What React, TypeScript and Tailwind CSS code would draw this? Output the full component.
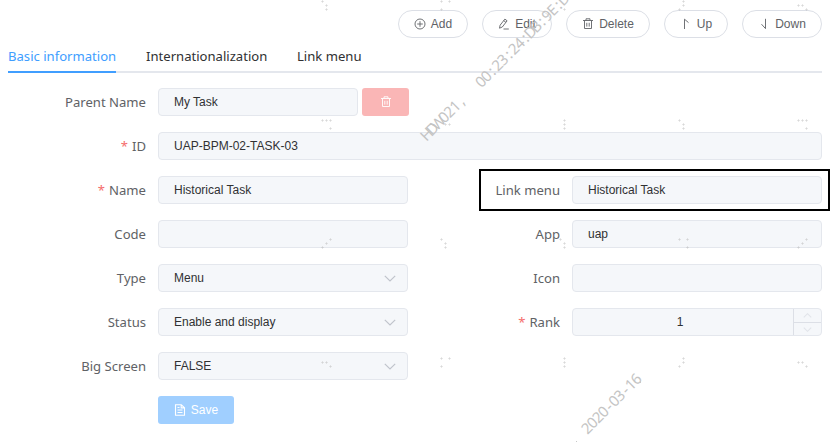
import type { ReactNode } from "react";

const iconBase = {
  fill: "none",
  stroke: "currentColor",
  viewBox: "0 0 12 12",
  width: 12,
  height: 12,
} as const;

const PlusIcon = () => (
  <svg {...iconBase} strokeWidth="0.9">
    <circle cx="6" cy="6" r="5" />
    <path d="M6 3.2v5.6M3.2 6h5.6" />
  </svg>
);
const EditIcon = () => (
  <svg {...iconBase} strokeWidth="0.9">
    <path d="M2.1 7.2 6.9 1.1 9.1 2.8 4.3 9 1.5 10.2ZM5.7 2.6l2.2 1.7M5.5 11h5.3" />
  </svg>
);
const TrashIcon = () => (
  <svg {...iconBase} strokeWidth="0.9">
    <path d="M1 2.5h10M4 2.5V.8h4v1.7M2.5 2.5v8h7v-8M4.8 4.8v3.8M7.2 4.8v3.8" />
  </svg>
);
const UpIcon = () => (
  <svg {...iconBase} strokeWidth="0.9">
    <path d="M4.5 11V1.2L8.5 4.6" />
  </svg>
);
const DownIcon = () => (
  <svg {...iconBase} strokeWidth="0.9">
    <path d="M7.5 .8v9.8L3.5 6.2" />
  </svg>
);
const DocIcon = () => (
  <svg {...iconBase} strokeWidth="1.1">
    <path d="M1.5.7h5.8l3.2 3.1v7.5h-9ZM7.2.7v3.2h3.3M3.5 3.5h2M3.5 6h5M3.5 8.5h5" />
  </svg>
);
const Chevron = ({ up = false, small = false }: { up?: boolean; small?: boolean }) => (
  <svg
    width={small ? 9 : 12}
    height={small ? 5 : 7}
    viewBox="0 0 12 7"
    fill="none"
    stroke="currentColor"
    strokeWidth={small ? 1.5 : 1.2}
    className={up ? "rotate-180" : ""}
  >
    <path d="M.8.8 6 6 11.2.8" />
  </svg>
);

function PillButton({ icon, label, width }: { icon: ReactNode; label: string; width: string }) {
  return (
    <button
      className={`flex h-7 items-center justify-center gap-[5px] rounded-full border border-[#dcdfe6] bg-white font-['Liberation_Sans',sans-serif] text-[12px] text-[#606266] ${width}`}
    >
      {icon}
      <span>{label}</span>
    </button>
  );
}

function Label({ text, required, width = "w-[138px]" }: { text: string; required?: boolean; width?: string }) {
  return (
    <label className={`shrink-0 text-right text-[13.1px] leading-7 whitespace-nowrap text-[#606266] ${width}`}>
      {required && <span className="mr-1 text-[#f56c6c]">*</span>}
      {text}
    </label>
  );
}

const boxClass =
  "flex h-7 items-center rounded border border-[#e4e7ed] bg-[#f5f7fa] px-[15px] font-['Liberation_Sans',sans-serif] text-[12px] text-[#303133]";

function Field({
  label,
  value = "",
  required,
  select,
  labelWidth,
}: {
  label: string;
  value?: string;
  required?: boolean;
  select?: boolean;
  labelWidth?: string;
}) {
  return (
    <div className="flex gap-3">
      <Label text={label} required={required} width={labelWidth} />
      <div className={`${boxClass} w-[250px] justify-between ${select ? "pr-[11px]" : ""}`}>
        <span>{value}</span>
        {select && (
          <span className="text-[#c0c4cc]">
            <Chevron />
          </span>
        )}
      </div>
    </div>
  );
}

const dots: [number, number][] = [
  [322, 1], [326, 5], [326, 9],
  [441, 1], [449, 1], [441, 9], [564, 9],
  [683, 1], [683, 5], [679, 9],
  [798, 5], [802, 5], [806, 9],
  [322, 120], [326, 120], [330, 120], [330, 128],
  [445, 124], [449, 124],
  [564, 120], [564, 124], [564, 128],
  [679, 120], [683, 124], [683, 128],
  [798, 120], [802, 120], [806, 120], [806, 128],
  [330, 239], [326, 243], [322, 247],
  [441, 239], [445, 243], [445, 247],
  [560, 239], [564, 243], [564, 247],
  [679, 239], [687, 239], [687, 247],
  [806, 239], [802, 243], [798, 247],
  [322, 362], [326, 362], [330, 366],
  [441, 358], [449, 358], [441, 366],
  [564, 358], [564, 362], [564, 366],
  [683, 358], [683, 362], [679, 366],
  [798, 362], [802, 362], [806, 366],
];

const steps = (count: number, step: number) => Array.from({ length: count }, (_, i) => i * step).join(" ");

function Watermark() {
  return (
    <svg className="pointer-events-none absolute inset-0" width="830" height="442" viewBox="0 0 830 442">
      {dots.map(([x, y]) => (
        <path
          key={`${x}-${y}`}
          d={`M${x - 1} ${y + 0.5}h3M${x + 0.5} ${y - 1}v3`}
          stroke="#b4b4b4"
          strokeOpacity="0.3"
          strokeWidth="1"
        />
      ))}
      <g
        fill="#c4c4c4"
        className="font-['Noto_Sans',sans-serif]"
        fontSize="15"
        textAnchor="middle"
      >
        <text transform="translate(430.5 138) rotate(-45)" x={steps(7, 8)}>
          HDW021,
        </text>
        <text transform="translate(484.5 85.5) rotate(-45)" x={steps(16, 7.8)}>
          00:23:24:DB:9E:D
        </text>
        <text transform="translate(590.5 432) rotate(-45)" x={steps(10, 7.75)}>
          2020-03-16
        </text>
      </g>
      <path d="M640 381h1v2h-1zM576 441h1v1h-1z" fill="#c8c8c8" />
    </svg>
  );
}

export default function App() {
  return (
    <div className="relative h-[442px] w-[830px] overflow-hidden bg-white px-2 pt-[10px] font-['Noto_Sans',sans-serif]">
      <div className="flex justify-end gap-[14px]">
        <PillButton icon={<PlusIcon />} label="Add" width="w-[70px]" />
        <PillButton icon={<EditIcon />} label="Edit" width="w-[70px]" />
        <PillButton icon={<TrashIcon />} label="Delete" width="w-[84px]" />
        <PillButton icon={<UpIcon />} label="Up" width="w-[64px]" />
        <PillButton icon={<DownIcon />} label="Down" width="w-[80px]" />
      </div>

      <nav className="mt-[3px] flex h-8 gap-[30px] border-b-2 border-[#e4e7ed] text-[13.1px] leading-[31px] whitespace-nowrap text-[#303133]">
        <span className="h-8 w-[108px] border-b-2 border-[#409eff] text-[#409eff]">Basic information</span>
        <span className="w-[121px]">Internationalization</span>
        <span>Link menu</span>
      </nav>

      <form className="mt-[15px] flex flex-col gap-4">
        <div className="flex">
          <Label text="Parent Name" />
          <div className={`${boxClass} ml-3 w-[200px]`}>My Task</div>
          <button
            type="button"
            className="ml-1 flex h-7 w-[47px] items-center justify-center rounded-[3px] bg-[#fab6b6] text-white"
          >
            <TrashIcon />
          </button>
        </div>
        <div className="flex gap-3">
          <Label text="ID" required />
          <div className={`${boxClass} flex-1`}>UAP-BPM-02-TASK-03</div>
        </div>
        <div className="flex justify-between">
          <Field label="Name" value="Historical Task" required />
          <div className="-mx-2 -my-[7px] flex w-[351px] shrink-0 justify-end border-2 border-black py-[5px] pr-[6px]">
            <Field label="Link menu" value="Historical Task" labelWidth="w-[79px]" />
          </div>
        </div>
        <div className="flex justify-between">
          <Field label="Code" />
          <Field label="App" value="uap" />
        </div>
        <div className="flex justify-between">
          <Field label="Type" value="Menu" select />
          <Field label="Icon" />
        </div>
        <div className="flex justify-between">
          <Field label="Status" value="Enable and display" select />
          <div className="flex w-[400px] gap-3">
            <Label text="Rank" required />
            <div className="flex h-7 flex-1 overflow-hidden rounded border border-[#e4e7ed] bg-[#f5f7fa] font-['Liberation_Sans',sans-serif] text-[12px] text-[#303133]">
              <span className="flex-1 pr-[6px] text-center leading-[26px]">1</span>
              <span className="flex w-7 flex-col border-l border-[#dcdfe6] text-[#e1e4ea]">
                <span className="flex h-[14px] items-center justify-center border-b border-[#dcdfe6]">
                  <Chevron up small />
                </span>
                <span className="flex h-3 items-center justify-center">
                  <Chevron small />
                </span>
              </span>
            </div>
          </div>
        </div>
        <Field label="Big Screen" value="FALSE" select />
        <button
          type="button"
          className="ml-[150px] flex h-7 w-[76px] items-center justify-center gap-[5px] rounded-[3px] bg-[#a0cfff] font-['Liberation_Sans',sans-serif] text-[12px] text-white"
        >
          <DocIcon />
          <span>Save</span>
        </button>
      </form>
      <Watermark />
    </div>
  );
}
